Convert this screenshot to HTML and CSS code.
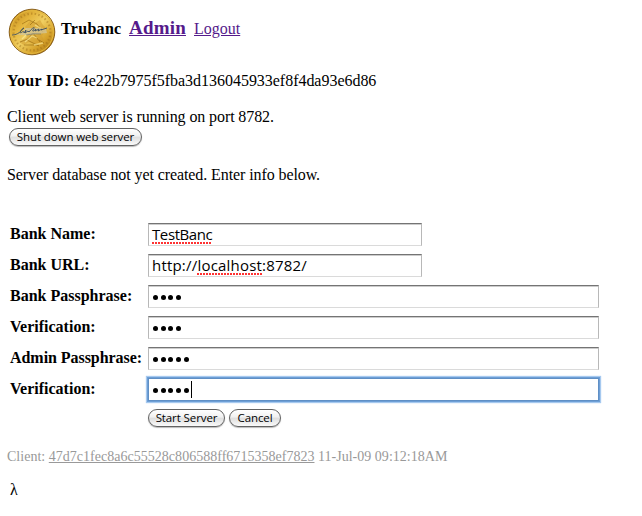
FILE: index.html
```html
<!DOCTYPE html>
<html lang="en">
<head>
<meta charset="utf-8">
<title>Trubanc Admin</title>
<link rel="stylesheet" href="styles.css">
</head>
<body>
<header class="header">
  <svg class="coin" width="48" height="48" viewBox="0 0 48 48" aria-hidden="true">
    <defs>
      <linearGradient id="gold" x1="0" y1="0" x2="1" y2="1">
        <stop offset="0" stop-color="#b67d12"/><stop offset=".3" stop-color="#e3b33a"/>
        <stop offset=".5" stop-color="#f0cf62"/><stop offset=".72" stop-color="#d6a22b"/><stop offset="1" stop-color="#966008"/>
      </linearGradient>
    </defs>
    <circle cx="24" cy="24" r="22.8" fill="url(#gold)" stroke="#80540d" stroke-width=".9"/>
    <circle cx="24" cy="24" r="21.3" fill="none" stroke="#e4b83f" stroke-width="1"/>
    <circle cx="24" cy="24" r="18.4" fill="none" stroke="#9c6b16" stroke-width="2.2" stroke-dasharray="1.5 2.2" opacity=".45"/>
    <path d="M11 34l7-4 3-7-4-4 5-6 5 2 5-3 3 5 4 4-5 7 2 5-8 3-7-2-5 3z" fill="#cf992c" opacity=".5"/>
    <path d="M14 16l7-4 8 4 6 8M12 34l8-3 5-6 7 9M19 32l12 6M16 37h15M27 12l-5 5M31 32l5 3" fill="none" stroke="#855706" stroke-width="1" opacity=".5"/>
    <path d="M17 34l7-6 5 2M14 31l5-5M26 37l9-2M27 17l7 4" fill="none" stroke="#fff0a2" stroke-width="1.3" opacity=".6"/>
    <path d="M6 27l6-1 6-6h11l9 1 1 4-20 2z" fill="#d2c69b" opacity=".75"/>
    <path d="M4 27c6 0 9-4 12-7-2 0-5 5-3 5 2-2 3-2 3 0l2-3-1 3 3-2 1 1c4-5 7-6 4-2-1 2 1 1 3-1l-1 2 4-2-1 2 4-2-1 1 6-2" fill="none" stroke="#3e5060" stroke-width=".9"/>
    <path d="M18 27q8-2 15-1" fill="none" stroke="#64716e" stroke-width=".6"/>
  </svg>
  <b class="brand">Trubanc</b>
  <a class="admin" href="#">Admin</a>
  <a class="logout" href="#">Logout</a>
</header>
<p class="identity"><b>Your ID:</b> <span>e4e22b7975f5fba3d136045933ef8f4da93e6d86</span></p>
<p class="status">Client web server is running on port 8782.</p>
<button class="button shutdown">Shut down web server</button>
<p class="message">Server database not yet created. Enter info below.</p>
<form class="form">
  <div class="row"><label>Bank Name:</label><div class="field short"><span class="name typo">TestBanc</span></div></div>
  <div class="row"><label>Bank URL:</label><div class="field short"><span class="url">http://<span class="typo">localhost</span>:8782/</span></div></div>
  <div class="row"><label>Bank Passphrase:</label><div class="field"><i></i><i></i><i></i><i></i></div></div>
  <div class="row"><label>Verification:</label><div class="field"><i></i><i></i><i></i><i></i></div></div>
  <div class="row"><label class="wide">Admin Passphrase:</label><div class="field"><i></i><i></i><i></i><i></i><i></i></div></div>
  <div class="row"><label>Verification:</label><div class="field focused"><i></i><i></i><i></i><i></i><i></i><span class="caret"></span></div></div>
  <div class="actions"><button type="button" class="button start">Start Server</button><button type="button" class="button cancel">Cancel</button></div>
</form>
<footer class="footer">Client: <a href="#">47d7c1fec8a6c55528c806588ff6715358ef7823</a> 11-Jul-09 09:12:18AM</footer>
<p class="lambda">λ</p>
</body>
</html>
```
FILE: styles.css
```css
* { box-sizing: border-box; }
body { margin: 0; padding: 8px 7px; background: #fff; color: #000; font: 16px/18px "Liberation Serif", serif; }
p { margin: 0; white-space: nowrap; }
a { color: #551a8b; text-underline-offset: 1px; }
.header { display: flex; align-items: baseline; height: 48px; padding-left: 1px; }
.coin { flex: none; align-self: flex-start; margin-right: 5px; }
.header .brand { width: 68px; margin-top: 12px; letter-spacing: .3px; }
.admin { font-size: 19px; font-weight: bold; width: 65px; letter-spacing: .2px; }
.identity { margin-top: 16px; }
.identity b { letter-spacing: .25px; }
.identity span { letter-spacing: -.03px; }
.status { margin-top: 18px; letter-spacing: -.1px; }
.button { display: block; height: 18px; padding: 0 0 1px; border: 1px solid #626262; border-radius: 9px; background: linear-gradient(#fff 0%, #f1f1f1 45%, #dedede 50%, #fafafa 100%); box-shadow: 0 1px 1px #bbb; color: #000; font: 11.5px/13px "Open Sans", sans-serif; letter-spacing: -.1px; white-space: nowrap; }
.shutdown { width: 133px; margin: 2px 0 0 2px; }
.message { margin-top: 20px; letter-spacing: -.09px; }
.form { margin-top: 35px; padding-left: 3px; }
.row { display: flex; height: 31px; align-items: center; }
label { width: 138px; flex: none; font-weight: bold; white-space: nowrap; padding-bottom: 1px; }
.wide { letter-spacing: -.05px; }
.field { display: flex; align-items: center; width: 451px; height: 23px; padding: 0 3px 1px; border: 1px solid #b8b8b8; border-top-color: #747474; border-bottom-color: #dadada; box-shadow: inset 0 1px #ccc; font: 15px/20px "Open Sans", sans-serif; }
.short { width: 274px; }
.name { letter-spacing: -.4px; }
.url { letter-spacing: .2px; }
.typo { background: radial-gradient(circle at 1px 1px, #f33 0 .9px, transparent 1.1px) 0 100% / 3px 2px repeat-x; }
.field i { width: 5px; height: 5px; margin: 3px 1.3px 0; border-radius: 50%; background: #000; }
.focused { border-color: #5f8fc5; box-shadow: 0 0 0 1px #6e9fd6, 0 0 1px 2px #a6c9ef; }
.caret { width: 1px; height: 17px; margin-left: 1px; background: #000; }
.actions { display: flex; gap: 4px; padding: 4px 0 0 138px; }
.start { width: 77px; }
.cancel { width: 52px; }
.footer { margin-top: 21px; color: #999; font-size: 14px; letter-spacing: .02px; white-space: nowrap; }
.footer a { color: #999; }
.lambda { margin: 15px 0 0 3px; }
```
